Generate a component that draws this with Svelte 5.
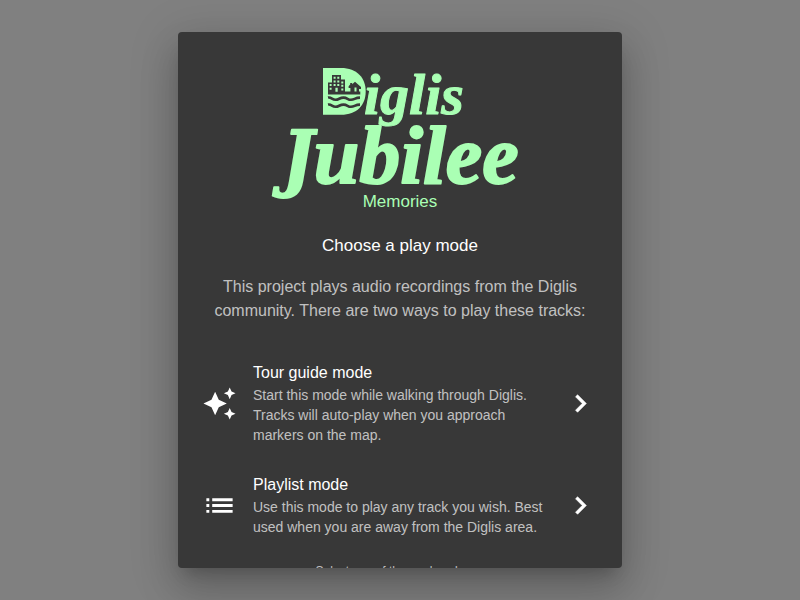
<script>
  const modes = [
    {
      title: 'Tour guide mode',
      text: 'Start this mode while walking through Diglis. Tracks will auto-play when you approach markers on the map.',
      icon: 'M19 9l1.25-2.75L23 5l-2.75-1.25L19 1l-1.25 2.75L15 5l2.75 1.25L19 9zm-7.5.5L9 4 6.5 9.5 1 12l5.5 2.5L9 20l2.5-5.5L17 12l-5.5-2.5zM19 15l-1.25 2.75L15 19l2.75 1.25L19 23l1.25-2.75L23 19l-2.75-1.25L19 15z'
    },
    {
      title: 'Playlist mode',
      text: 'Use this mode to play any track you wish. Best used when you are away from the Diglis area.',
      icon: 'M3 13h2v-2H3v2zm0 4h2v-2H3v2zm0-8h2V7H3v2zm4 4h14v-2H7v2zm0 4h14v-2H7v2zM7 7v2h14V7H7z'
    }
  ];
  let selected = $state('');
</script>

<div class="backdrop">
  <div class="dialog" role="dialog" aria-modal="true" aria-labelledby="dialog-title">
    <header>
      <svg class="logo" viewBox="0 0 240 126" role="img" aria-label="Diglis Jubilee">
        <path class="mint" d="M47 2H65C81 2 89.7 12 89.7 25.4S81 48.7 65 48.7H47z" />
        <path class="ink" d="M52 16.4h4V9h9v4.400h4V25.500h5.400v-3.500h-1.800v-1.800l1.600-1.600V17h2v1.200l2.800-2.400 6 5.200v2H83v2.500h1.300v3H52z" />
        <path class="mint" d="M57.600 10.800h2v2h-2zM61.300 10.800h2v2h-2zM57.600 14.400h2v2h-2zM61.300 14.400h2v2h-2zM65.300 15.400h2v2h-2zM57.600 18h2v2h-2zM61.300 18h2v2h-2zM65.300 18.800h2v2h-2zM53.600 18h2v2h-2zM53.600 21.800h2v2h-2zM65.300 22.400h2v2h-2zM59.400 21.800h2.300v4h-2.300zM78.500 21.500h2v4h-2z" />
        <g class="wave">
          <path d="M52 31.600c3.500-.7 4 2.200 7.500 2.200s4-2.200 8-2.200 4 2.200 7.500 2.200 4-2.200 9-2.200" />
          <path d="M52 38.600c3.500-.7 4 2.200 7.500 2.200s4-2.200 8-2.200 4 2.200 7.500 2.200 4-2.200 9-2.200" />
        </g>
        <text class="small" x="88" y="48">iglis</text>
        <text class="big" x="7" y="117"><tspan class="initial">J</tspan>ubilee</text>
      </svg>
      <div class="tagline">Memories</div>
    </header>
    <h1 id="dialog-title">Choose a play mode</h1>
    <p class="intro">This project plays audio recordings from the Diglis community. There are two ways to play these tracks:</p>
    <ul>
      {#each modes as mode}
        <li>
          <button type="button" aria-pressed={selected === mode.title} onclick={() => (selected = mode.title)}>
            <svg class="icon" viewBox="0 0 24 24" aria-hidden="true"><path d={mode.icon} /></svg>
            <span class="copy">
              <span class="title">{mode.title}</span>
              <span class="text">{mode.text}</span>
            </span>
            <svg class="icon chevron" viewBox="0 0 24 24" aria-hidden="true"><path d="M10 6 8.59 7.41 13.17 12l-4.58 4.59L10 18l6-6z" /></svg>
          </button>
        </li>
      {/each}
    </ul>
    <p class="hint">Select one of the modes above.</p>
  </div>
</div>

<style>
  :global(body) {
    margin: 0;
    background: #808080;
  }
  .backdrop {
    box-sizing: border-box;
    height: 100vh;
    padding: 32px;
    display: flex;
    justify-content: center;
    align-items: center;
    font-family: "Liberation Sans", Arial, sans-serif;
    color: #fff;
  }
  .dialog {
    box-sizing: border-box;
    width: 100%;
    max-width: 444px;
    max-height: 100%;
    padding: 32px 0 24px;
    overflow: hidden;
    border-radius: 4px;
    background: #383838;
    box-shadow: 0 11px 15px -7px rgba(0, 0, 0, 0.2), 0 24px 38px 3px rgba(0, 0, 0, 0.14), 0 9px 46px 8px rgba(0, 0, 0, 0.12);
  }
  header {
    display: flex;
    flex-direction: column;
    align-items: center;
    color: #aaffb4;
  }
  .logo {
    width: 240px;
    height: 126px;
    margin: 2px 8px 0 0;
    overflow: visible;
  }
  .mint {
    fill: #aaffb4;
  }
  .ink {
    fill: #383838;
  }
  .wave {
    fill: none;
    stroke: #383838;
    stroke-width: 2.6;
  }
  .small,
  .big {
    font-family: "Liberation Serif", "Times New Roman", serif;
    font-weight: 700;
    font-style: italic;
    fill: #aaffb4;
    stroke: #aaffb4;
    stroke-linejoin: round;
    stroke-width: 1px;
  }
  .small {
    font-size: 58px;
  }
  .big {
    font-size: 82px;
    stroke-width: 2px;
  }
  .initial {
    font-family: "DejaVu Serif Condensed", "DejaVu Serif", serif;
    font-size: 72px;
  }
  .tagline {
    font-size: 17px;
    line-height: 20px;
  }
  h1 {
    margin: 22px 24px 0;
    font-size: 17px;
    font-weight: 400;
    line-height: 24px;
    text-align: center;
  }
  .intro {
    margin: 17px 24px 0;
    font-size: 16px;
    line-height: 24px;
    text-align: center;
    color: rgba(255, 255, 255, 0.7);
  }
  ul {
    margin: 24px 0 0;
    padding: 0;
    list-style: none;
  }
  button {
    width: 100%;
    padding: 14px 24px;
    display: flex;
    align-items: center;
    gap: 16px;
    border: 0;
    background: none;
    color: inherit;
    font: inherit;
    text-align: left;
    cursor: pointer;
  }
  .icon {
    flex: none;
    width: 35px;
    height: 35px;
    fill: #fff;
  }
  .chevron {
    stroke: #fff;
    stroke-width: 0.4;
  }
  .copy {
    flex: 1;
    display: flex;
    flex-direction: column;
  }
  .title {
    font-size: 16px;
    line-height: 24px;
  }
  .text {
    font-size: 14px;
    line-height: 20px;
    color: rgba(255, 255, 255, 0.7);
  }
  .hint {
    margin: 10px 24px 0;
    font-size: 12px;
    line-height: 20px;
    text-align: center;
    color: rgba(255, 255, 255, 0.7);
  }
</style>
